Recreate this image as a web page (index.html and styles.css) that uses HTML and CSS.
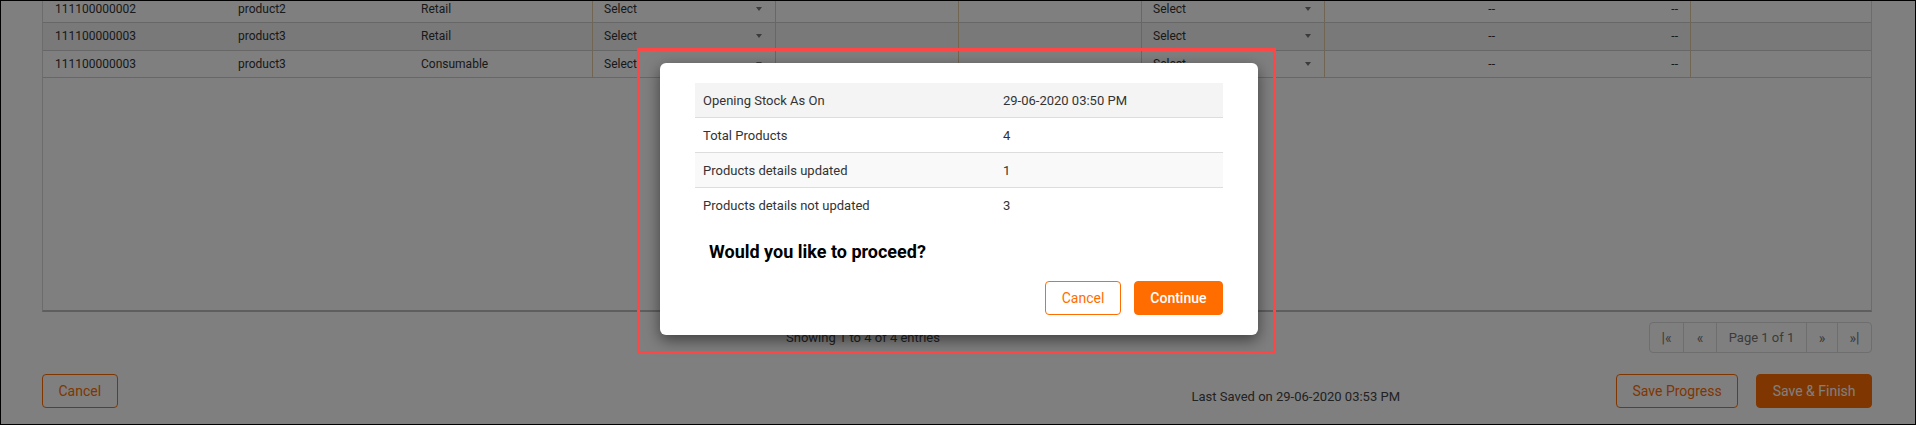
FILE: index.html
```
<!DOCTYPE html>
<html lang="en">
<head>
<meta charset="utf-8">
<title>Opening Stock</title>
<link rel="stylesheet" href="styles.css">
</head>
<body>
<div class="screen">
  <div class="grid-wrap">
    <table class="grid">
      <colgroup>
        <col class="c"><col class="c"><col class="c"><col class="c"><col class="c">
        <col class="c"><col class="c"><col class="c"><col class="c"><col>
      </colgroup>
      <tbody>
        <tr>
          <td>111100000002</td>
          <td>product2</td>
          <td>Retail</td>
          <td class="edit"><span class="select">Select</span></td>
          <td class="edit"></td>
          <td class="edit"></td>
          <td class="edit"><span class="select">Select</span></td>
          <td class="edit num">--</td>
          <td class="num">--</td>
          <td class="edit"></td>
        </tr>
        <tr class="alt">
          <td>111100000003</td>
          <td>product3</td>
          <td>Retail</td>
          <td class="edit"><span class="select">Select</span></td>
          <td class="edit"></td>
          <td class="edit"></td>
          <td class="edit"><span class="select">Select</span></td>
          <td class="edit num">--</td>
          <td class="num">--</td>
          <td class="edit"></td>
        </tr>
        <tr>
          <td>111100000003</td>
          <td>product3</td>
          <td>Consumable</td>
          <td class="edit"><span class="select">Select</span></td>
          <td class="edit"></td>
          <td class="edit"></td>
          <td class="edit"><span class="select">Select</span></td>
          <td class="edit num">--</td>
          <td class="num">--</td>
          <td class="edit"></td>
        </tr>
      </tbody>
    </table>
  </div>

  <div class="grid-footer">
    <span class="info">Showing 1 to 4 of 4 entries</span>
    <nav class="pager">
      <span class="p-first">|«</span>
      <span class="p-prev">«</span>
      <span class="p-page">Page 1 of 1</span>
      <span class="p-next">»</span>
      <span class="p-last">»|</span>
    </nav>
  </div>

  <div class="actions">
    <button class="btn">Cancel</button>
    <span class="saved">Last Saved on 29-06-2020 03:53 PM</span>
    <button class="btn">Save Progress</button>
    <button class="btn btn-solid finish">Save &amp; Finish</button>
  </div>

  <div class="backdrop"></div>

  <div class="modal">
    <table class="summary">
      <tbody>
        <tr><td>Opening Stock As On</td><td>29-06-2020 03:50 PM</td></tr>
        <tr><td>Total Products</td><td>4</td></tr>
        <tr><td>Products details updated</td><td>1</td></tr>
        <tr><td>Products details not updated</td><td>3</td></tr>
      </tbody>
    </table>
    <p class="question">Would you like to proceed?</p>
    <div class="modal-actions">
      <button class="btn">Cancel</button>
      <button class="btn btn-solid strong">Continue</button>
    </div>
  </div>

  <div class="highlight"></div>
</div>
</body>
</html>
```
FILE: styles.css
```
html, body {
  margin: 0;
  padding: 0;
  background: #fff;
}

.screen {
  position: relative;
  width: 1916px;
  height: 425px;
  box-sizing: border-box;
  border: 1px solid #000;
  padding: 0 43px 0 41px;
  overflow: hidden;
  background: #fff;
  font-family: Roboto, "Liberation Sans", Arial, sans-serif;
  color: #333;
}

/* ---------- grid ---------- */
.grid-wrap {
  height: 311px;
  box-sizing: border-box;
  border-left: 1px solid #d9d9d9;
  border-right: 1px solid #d9d9d9;
  border-bottom: 2px solid #bcbcbc;
  overflow: hidden;
}

.grid {
  width: 100%;
  table-layout: fixed;
  border-collapse: separate;
  border-spacing: 0;
  margin-top: -5.5px;
  font-size: 12px;
  color: #333;
}

.grid col.c {
  width: 183px;
}

.grid td {
  height: 27.5px;
  box-sizing: border-box;
  padding: 0 12px;
  border-bottom: 1px solid #cecece;
  white-space: nowrap;
  overflow: hidden;
  vertical-align: middle;
}

.grid tr.alt td {
  background: #f3f3f3;
}

.grid td.edit {
  border-left: 1px solid #e4cda6;
  padding-left: 11px;
}

.grid td.num {
  text-align: right;
}

.select {
  display: flex;
  align-items: center;
  justify-content: space-between;
}

.select::after {
  content: "";
  width: 0;
  height: 0;
  border-left: 3px solid transparent;
  border-right: 3px solid transparent;
  border-top: 4px solid #777;
  margin-right: 1px;
}

/* ---------- footer of grid ---------- */
.grid-footer {
  display: flex;
  align-items: center;
  margin-top: 10px;
}

.info {
  margin-left: 744px;
  font-size: 13px;
  color: #444;
}

.pager {
  margin-left: auto;
  display: flex;
  height: 31px;
  box-sizing: border-box;
  border: 1px solid #dcdcdc;
  border-radius: 4px;
}

.pager span {
  display: flex;
  align-items: center;
  justify-content: center;
  box-sizing: border-box;
  border-left: 1px solid #dcdcdc;
  font-size: 14px;
  color: #777;
}

.pager span:first-child {
  border-left: 0;
}

.p-first { width: 33px; }
.p-prev { width: 33px; }
.pager .p-page { width: 90px; font-size: 13px; }
.p-next { width: 31px; }
.p-last { width: 34px; }

/* ---------- bottom actions ---------- */
.actions {
  display: flex;
  margin-top: 21px;
  height: 34px;
}

.btn {
  height: 34px;
  box-sizing: border-box;
  padding: 0 15.5px;
  border: 1px solid #ff6d00;
  border-radius: 4px;
  background: #fff;
  color: #ff6d00;
  font-family: Roboto, "Liberation Sans", Arial, sans-serif;
  font-size: 14px;
  line-height: 1;
  cursor: pointer;
}

.btn-solid {
  background: #ff6d00;
  color: #fff;
}

.btn.strong {
  font-weight: 500;
}

.saved {
  margin-left: auto;
  margin-right: 216px;
  align-self: flex-end;
  margin-bottom: 4.5px;
  font-size: 13px;
  line-height: 15px;
  color: #444;
}

.finish {
  margin-left: 18px;
}

/* ---------- overlay ---------- */
.backdrop {
  position: absolute;
  inset: 0;
  background: rgba(0, 0, 0, 0.5);
  z-index: 1;
}

.modal {
  position: absolute;
  left: 659px;
  top: 62px;
  width: 598px;
  box-sizing: border-box;
  padding: 20px 35px;
  background: #fff;
  border-radius: 6px;
  box-shadow: 0 5px 15px rgba(0, 0, 0, 0.5);
  z-index: 2;
}

.summary {
  width: 100%;
  border-collapse: separate;
  border-spacing: 0;
  font-size: 13px;
  color: #333;
}

.summary td {
  height: 35px;
  box-sizing: border-box;
  padding: 0 8px;
  border-bottom: 1px solid #dddddd;
  vertical-align: middle;
}

.summary td:first-child {
  width: 300px;
}

.summary tr:nth-child(1) td {
  background: #f4f4f4;
}

.summary tr:nth-child(3) td {
  background: #f9f9f9;
}

.summary tr:last-child td {
  border-bottom: 0;
}

.question {
  margin: 19px 0 0 14px;
  font-size: 18px;
  font-weight: 700;
  line-height: 20px;
  color: #000;
}

.modal-actions {
  display: flex;
  justify-content: flex-end;
  gap: 13px;
  margin-top: 19px;
}

.highlight {
  position: absolute;
  left: 636px;
  top: 47px;
  width: 639px;
  height: 306px;
  box-sizing: border-box;
  border: 3px solid #ff4646;
  z-index: 3;
  pointer-events: none;
}
```
